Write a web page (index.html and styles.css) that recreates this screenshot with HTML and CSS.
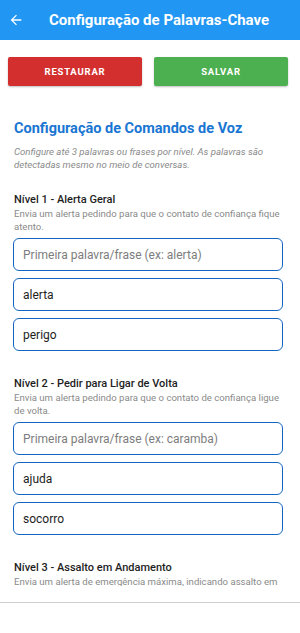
FILE: index.html
```html
<!doctype html>
<html>
<head>
<meta charset="utf-8">
<title>Configuração de Palavras-Chave</title>
  <link rel="stylesheet" href="styles.css">
</head>
<body>
  <header class="topbar">
    <span class="back">
      <svg viewBox="0 0 24 24" width="16" height="16"><path fill="#fff" d="M20 11H7.83l5.59-5.59L12 4l-8 8 8 8 1.41-1.41L7.83 13H20v-2z"/></svg>
    </span>
    <h1 class="topbar-title">Configuração de Palavras-Chave</h1>
  </header>

  <main class="scroll">
    <div class="actions">
      <button class="btn btn-red">RESTAURAR</button>
      <button class="btn btn-green">SALVAR</button>
    </div>

    <section class="config">
      <h2 class="config-title">Configuração de Comandos de Voz</h2>
      <p class="config-hint">Configure até 3 palavras ou frases por nível. As palavras são detectadas mesmo no meio de conversas.</p>

      <div class="level level-first">
        <h3 class="level-title">Nível 1 - Alerta Geral</h3>
        <p class="level-desc">Envia um alerta pedindo para que o contato de confiança fique atento.</p>
        <input class="field" type="text" placeholder="Primeira palavra/frase (ex: alerta)">
        <input class="field" type="text" value="alerta">
        <input class="field" type="text" value="perigo">
      </div>

      <div class="level">
        <h3 class="level-title">Nível 2 - Pedir para Ligar de Volta</h3>
        <p class="level-desc">Envia um alerta pedindo para que o contato de confiança ligue de volta.</p>
        <input class="field" type="text" placeholder="Primeira palavra/frase (ex: caramba)">
        <input class="field" type="text" value="ajuda">
        <input class="field" type="text" value="socorro">
      </div>

      <div class="level">
        <h3 class="level-title">Nível 3 - Assalto em Andamento</h3>
        <p class="level-desc">Envia um alerta de emergência máxima, indicando assalto em andamento.</p>
        <input class="field" type="text" placeholder="Primeira palavra/frase (ex: socorro)">
      </div>
    </section>
  </main>

  <footer class="bottom"></footer>
</body>
</html>
```

FILE: styles.css
```css
body {
  margin: 0;
  padding: 0;
  background: #fff;
  font-family: Roboto, 'Noto Sans', Arial, sans-serif;
}

.topbar {
  display: flex;
  align-items: center;
  height: 40px;
  background: #2196F3;
  color: #fff;
}
.back {
  display: flex;
  width: 16px;
  height: 16px;
  margin-left: 8px;
  margin-right: 25px;
}
.topbar-title {
  margin: 0;
  font-size: 15px;
  font-weight: 700;
  line-height: 18px;
}

/* zona rolável, cortada antes da barra inferior */
.scroll {
  height: 546px;
  overflow: hidden;
}

.actions {
  display: flex;
  gap: 12px;
  padding: 17px 12px 0 8px;
}
.btn {
  flex: 1;
  height: 29px;
  border: 0;
  border-radius: 2px;
  color: #fff;
  font-family: Roboto, Arial, sans-serif;
  font-size: 9.5px;
  font-weight: 700;
  letter-spacing: .8px;
  box-shadow: 0 1px 2px rgba(0, 0, 0, .25);
}
.btn-red {
  background: #D32F2F;
}
.btn-green {
  background: #4CAF50;
}

.config {
  padding: 0 17px 0 13px;
}
.config-title {
  margin: 36px 0 0 1px;
  font-size: 14.5px;
  font-weight: 700;
  line-height: 14px;
  color: #1976D2;
}
.config-hint {
  margin: 10px 0 0 1px;
  font-size: 9.6px;
  font-style: italic;
  line-height: 12.5px;
  color: #8a8a8a;
}

.level {
  margin-top: 26px;
}
.level-first {
  margin-top: 22px;
}
.level-title {
  margin: 0 0 0 1px;
  font-size: 11px;
  font-weight: 500;
  line-height: 14px;
  color: #1e1e1e;
}
.level-desc {
  margin: 1px 0 5px 1px;
  font-size: 9.6px;
  line-height: 12.5px;
  color: #8a8a8a;
}
.field {
  display: block;
  box-sizing: border-box;
  width: 100%;
  height: 33px;
  margin-bottom: 7px;
  padding: 0 9px;
  border: 1.5px solid #1565C0;
  border-radius: 6px;
  outline: none;
  font-family: Roboto, Arial, sans-serif;
  font-size: 12px;
  color: #1e1e1e;
  background: #fff;
}
.field::placeholder {
  color: #7d7d7d;
}

.bottom {
  height: 30px;
  margin-top: 16px;
  border-top: 1.5px solid #cfcfcf;
}
```
